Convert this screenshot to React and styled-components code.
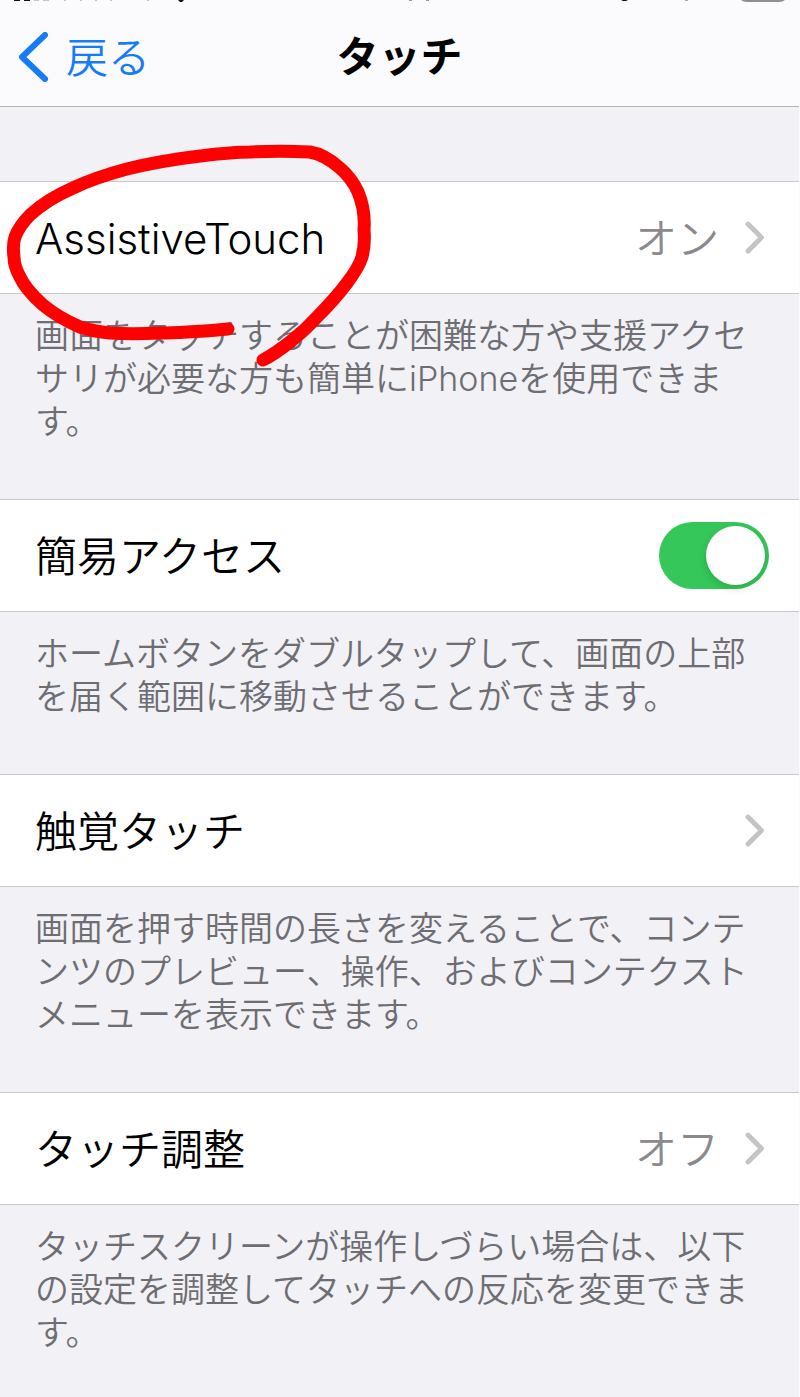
import React, { useState } from "react";
import styled, { createGlobalStyle } from "styled-components";

const sections = [
    {
        id: "assistive",
        title: "AssistiveTouch",
        value: "オン",
        marked: true,
        note: "画面をタッチすることが困難な方や支援アクセサリが必要な方も簡単にiPhoneを使用できます。",
    },
    {
        id: "reachability",
        title: "簡易アクセス",
        toggle: true,
        note: "ホームボタンをダブルタップして、画面の上部を届く範囲に移動させることができます。",
    },
    {
        id: "haptic",
        title: "触覚タッチ",
        note: "画面を押す時間の長さを変えることで、コンテンツのプレビュー、操作、およびコンテクストメニューを表示できます。",
    },
    {
        id: "accommodations",
        title: "タッチ調整",
        value: "オフ",
        note: "タッチスクリーンが操作しづらい場合は、以下の設定を調整してタッチへの反応を変更できます。",
    },
];

const Chevron = () => (
    <svg width="20" height="34" viewBox="0 0 20 34" fill="none" aria-hidden="true">
        <path d="M3 3 16.500 16.500 3 30" stroke="#c4c4c7" strokeWidth="4.800" strokeLinecap="round" strokeLinejoin="round" />
    </svg>
);

// only the lower edge of the status bar shows above the nav bar
const StatusBar = () => (
    <StatusRow aria-hidden="true">
        <svg width="202" height="3" viewBox="0 0 202 3">
            <path d="M0 0h6v1h-6zM10 0h6v1h-6zM164 0h6l-2 2h-2z" fill="#111" />
            <path d="M20 0h5v1h-5zM29 0h6v1h-6zM50 0h2v1h-2zM66 0h2v1h-2zM81 0h2v1h-2zM96 0h2v1h-2zM133 0h2v1h-2z" fill="#c4c4c6" />
        </svg>
        <svg width="20" height="3" viewBox="0 0 20 3">
            <path d="M0 0h3v1h-3zM17 0h3v1h-3z" fill="#999" />
        </svg>
        <svg width="164" height="3" viewBox="0 0 164 3">
            <path d="M0 0h7l-2 1h-3z" fill="#111" />
            <path d="M64 0h3v1h-3z" fill="#aaa" />
            <path d="M120 0h44q-2 2-6 2h-32q-4 0-6-2z" fill="#8e8e93" />
        </svg>
    </StatusRow>
);

const Section = ({ section }) => {
    const [checked, setChecked] = useState(true);

    return (
        <Group>
            {section.toggle ? (
                <Row as="div">
                    <Label as="label" htmlFor={section.id}>{section.title}</Label>
                    <Switch
                        id={section.id}
                        type="checkbox"
                        checked={checked}
                        onChange={(e) => setChecked(e.target.checked)}
                    />
                </Row>
            ) : (
                <Row href={`#${section.id}`}>
                    <Label>{section.title}</Label>
                    {section.value ? <Value>{section.value}</Value> : null}
                    <Chevron />
                </Row>
            )}
            <Note>{section.note}</Note>
            {section.marked ? (
                <Marker viewBox="0 0 380 230" fill="none" aria-hidden="true">
                    <path
                        d="M228 187C205 189 183 191 160 191C140 192 125 192 110 191C99 190 89 188 80 185C66 179 54 172 43 163C33 154 25 146 20 135C15 126 14 121 14 115C13 107 13 101 15 95C18 87 23 80 30 73C43 61 57 53 73 46C90 38 108 32 127 27C151 21 175 17 200 14C217 12 233 10 250 10C270 9 290 9 310 10C322 12 331 18 340 26C348 33 354 41 358 50C363 62 365 75 364 88C365 98 364 107 362 115C359 125 353 133 347 141C338 153 328 164 317 175C308 185 299 193 290 200C281 207 273 213 263 218"
                        stroke="#fe0000"
                        strokeWidth="13"
                        strokeLinecap="round"
                        strokeLinejoin="round"
                    />
                </Marker>
            ) : null}
        </Group>
    );
};

const App = () => (
    <Page>
        <GlobalStyle />
        <Header>
            <StatusBar />
            <NavBar>
                <Back type="button">
                    <svg width="32" height="50" viewBox="0 0 32 50" fill="none" aria-hidden="true">
                        <path d="M27 3 4 25 27 47" stroke="#167bf7" strokeWidth="6" strokeLinecap="round" strokeLinejoin="round" />
                    </svg>
                    <span>戻る</span>
                </Back>
                <Title>タッチ</Title>
            </NavBar>
        </Header>
        <main>
            {sections.map((section) => (
                <Section key={section.id} section={section} />
            ))}
        </main>
    </Page>
);
export default App;

const GlobalStyle = createGlobalStyle`
    * {
        box-sizing: border-box;
    }
    body {
        margin: 0;
        background: #f2f1f6;
        font-family: Inter, "Noto Sans CJK JP", sans-serif;
        font-weight: 350;
    }
    `;
const Page = styled.div`
    min-height: 100vh;
    background: #f2f1f6;
    border-right: 1px solid #fbfbfd;
    overflow: hidden;
    `;
const Header = styled.header`
    height: 107px;
    margin-bottom: 74px;
    background: #fbfbfd;
    border-bottom: 1px solid #b4b4b8;
    `;
const StatusRow = styled.div`
    display: flex;
    justify-content: space-between;
    height: 8px;
    padding: 0 14px;
    `;
const NavBar = styled.div`
    display: grid;
    grid-template-columns: 1fr auto 1fr;
    align-items: center;
    height: 98px;
    padding: 0 18px;
    `;
const Back = styled.button`
    display: flex;
    align-items: center;
    justify-self: start;
    gap: 16px;
    padding: 0;
    border: 0;
    background: none;
    color: #167bf7;
    font-family: inherit;
    font-size: 42px;
    font-weight: inherit;
    line-height: 50px;

    span {
        padding-top: 2px;
    }
    `;
const Title = styled.h1`
    margin: 0;
    font-size: 42px;
    font-weight: 700;
    line-height: 50px;
    `;
const Group = styled.section`
    position: relative;
    `;
const Row = styled.a`
    display: flex;
    align-items: center;
    min-height: 113px;
    padding: 0 34px 0 35px;
    background: #fff;
    border-top: 1px solid #c9c9cd;
    border-bottom: 1px solid #c9c9cd;
    color: #000;
    text-decoration: none;
    `;
const Label = styled.span`
    flex: 1;
    padding-top: 2px;
    font-size: 42px;
    line-height: 60px;
    `;
const Value = styled.span`
    margin-right: 26px;
    padding-top: 2px;
    color: #8a8a8e;
    font-size: 42px;
    line-height: 60px;
    `;
const Switch = styled.input`
    appearance: none;
    display: flex;
    width: 110px;
    height: 67px;
    margin: 0 -4px 0 0;
    padding: 4px;
    border-radius: 34px;
    background: ${({ checked }) => (checked ? "#35c759" : "#e9e9eb")};

    &::before {
        content: "";
        width: 59px;
        height: 59px;
        margin-left: ${({ checked }) => (checked ? "auto" : "0")};
        border-radius: 50%;
        background: #fff;
        box-shadow: 0 3px 8px rgba(0, 0, 0, 0.15);
    }
    `;
const Note = styled.p`
    margin: 0;
    padding: 20px 48px 56px 35px;
    color: #6d6d72;
    font-size: 34px;
    line-height: 43px;

    ${Group}:last-child & {
        padding-bottom: 40px;
    }
    `;
const Marker = styled.svg`
    position: absolute;
    top: -39px;
    left: 0;
    width: 380px;
    height: 230px;
    pointer-events: none;
    `;
